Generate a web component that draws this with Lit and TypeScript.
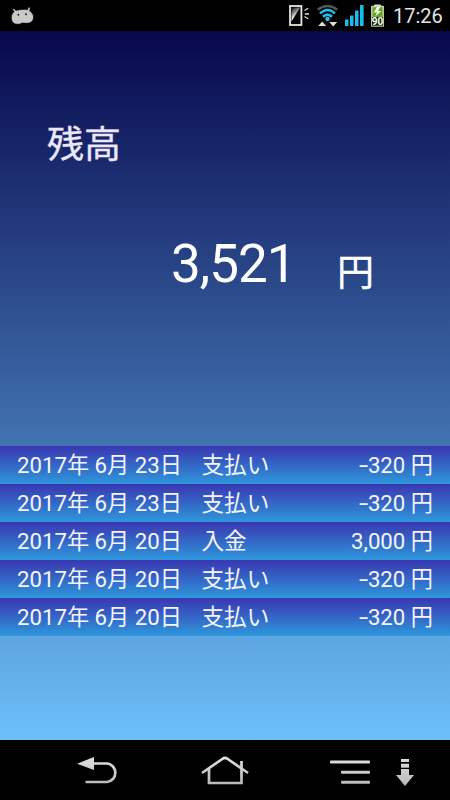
import { LitElement, html, css, svg, nothing } from "lit";
import { customElement, property } from "lit/decorators.js";

interface Entry {
  date: string;
  kind: string;
  amount: string;
}

const entries: Entry[] = [
  { date: "2017年 6月 23日", kind: "支払い", amount: "-320 円" },
  { date: "2017年 6月 23日", kind: "支払い", amount: "-320 円" },
  { date: "2017年 6月 20日", kind: "入金", amount: "3,000 円" },
  { date: "2017年 6月 20日", kind: "支払い", amount: "-320 円" },
  { date: "2017年 6月 20日", kind: "支払い", amount: "-320 円" },
];

const grey = svg`<defs><linearGradient id="g" gradientUnits="userSpaceOnUse" x1="0" y1="16" x2="0" y2="48">
  <stop offset="0" stop-color="#e2e2e2"/><stop offset="1" stop-color="#b4b4b4"/></linearGradient></defs>`;

@customElement("status-bar")
export class StatusBar extends LitElement {
  static styles = css`
    :host { display: flex; justify-content: space-between; height: 31px; background: #000; }
    svg { display: block; height: 31px; }
    .right { display: flex; }
    .clock { font-size: 20px; line-height: 32px; color: #e4e4e4; width: 57px; white-space: nowrap; }
    .level { font: bold 10px Roboto, "Liberation Sans", sans-serif; }
  `;
  render() {
    return html`
      <svg width="40" viewBox="0 0 40 31">
        <path fill="#c9c9c9" stroke="#c9c9c9" stroke-width=".4" d="M14.8 11.5L13 9.5L14 9L16 11C18 10.2 24 9.5 27.5 10.2L28.8 7.5L29.8 8L29 11C32 12.5 33.2 15 33 17.5C33 20.5 30.5 23 27 22.7C24 22.8 22 21.8 20.5 23.2C18 24.3 12.5 24 12 19.5C11.5 16.5 12 13.5 14.8 11.5Z"/>
        <circle cx="18.3" cy="14.8" r="1" fill="#222"/><circle cx="26" cy="14.2" r="1" fill="#222"/>
      </svg>
      <div class="right">
        <svg width="109" viewBox="284 0 109 31">
          <defs><linearGradient id="sheen" gradientUnits="userSpaceOnUse" x1="292" y1="8" x2="297" y2="15">
            <stop offset="0" stop-color="#111"/><stop offset="1" stop-color="#eee"/></linearGradient></defs>
          <rect x="290" y="6" width="11.4" height="19" fill="#050505" stroke="#e6e6e6" stroke-width="1.8"/>
          <path d="M291.5 7.5H300L291.5 21.5Z" fill="url(#sheen)"/>
          <path d="M304.5 10.5L308.2 8.2M304.8 14H309M304.5 16.5L308.2 18.7" stroke="#ddd" stroke-width="1.3" fill="none"/>
          <g fill="none" stroke-width="2.6">
            <path d="M317.8 9.8Q327.5 2.2 337.2 9.8" stroke="#555"/>
            <path d="M320 13.4Q327.5 6.6 335 13.4" stroke="#25bdec"/>
            <path d="M323 16.8Q327.5 12.4 332 16.8" stroke="#25bdec"/>
          </g>
          <circle cx="327.5" cy="19" r="2.2" fill="#25bdec"/>
          <path d="M318.2 26L322.2 21.5L326.2 26Z M329.2 22H337.2L333.2 26.5Z" fill="#ddd"/>
          <g fill="#18bdf0">
            <rect x="345" y="19.5" width="3.4" height="6.5" rx=".6"/><rect x="350" y="15.5" width="3.4" height="10.5" rx=".6"/>
            <rect x="355" y="10.5" width="3.5" height="15.5" rx=".6"/>
            <rect x="360" y="5" width="3.6" height="21" rx=".6"/>
          </g>
          <path d="M374.5 6.5V5H380.5V6.5" fill="#ddd" stroke="#ddd" stroke-width="1"/>
          <rect x="371.8" y="6.5" width="11.4" height="19.5" fill="#62a81e" stroke="#c8d8b0" stroke-width="1.4"/>
          <path d="M377 7L373.8 12.5H377L375.3 16.5L381.3 11H378L380 7Z" fill="#fff"/>
          <rect x="372" y="17" width="11" height="8.6" fill="#15200a"/>
          <text class="level" x="377.5" y="25" text-anchor="middle" fill="#fff">90</text>
        </svg>
        <div class="clock">17:26</div>
      </div>`;
  }
}

@customElement("balance-panel")
export class BalancePanel extends LitElement {
  static styles = css`
    :host { display: block; height: 415px; box-sizing: border-box; padding-top: 88px; color: #fff; }
    .title { margin-left: 47px; font-size: 37px; line-height: 54px; color: #ece8fa; -webkit-text-stroke: .35px currentColor; }
    .total { display: flex; align-items: baseline; margin: 56px 76px 0 171px; line-height: 70px; justify-content: space-between; }
    .sum { font-size: 53px; letter-spacing: -1px; }
    .yen { font-size: 37px; -webkit-text-stroke: .3px currentColor; position: relative; top: 4px; }
  `;
  render() {
    return html`<div class="title">残高</div>
      <div class="total"><span class="sum">3,521</span><span class="yen">円</span></div>`;
  }
}

@customElement("history-row")
export class HistoryRow extends LitElement {
  @property({ attribute: false }) entry!: Entry;
  static styles = css`
    :host { display: grid; grid-template-columns: 184.5px 1fr auto; height: 38px; box-sizing: border-box;
      padding: 0 17px; background: linear-gradient(#3a37b2, #2e97db);
      color: #f6f4ff; font-size: 22.2px; line-height: 39px; white-space: nowrap; }
    .kind { font-size: 22.6px; }
    .minus { display: inline-block; transform: scaleX(1.5); transform-origin: right; }
  `;
  render() {
    const { date, kind, amount } = this.entry;
    const negative = amount.startsWith("-");
    return html`<span>${date}</span><span class="kind">${kind}</span>
      <span>${negative ? html`<span class="minus">-</span>` : nothing}${negative ? amount.slice(1) : amount}</span>`;
  }
}

@customElement("nav-bar")
export class NavBar extends LitElement {
  static styles = css`
    :host { display: block; height: 60px; background: #000; }
    svg { display: block; }
  `;
  render() {
    return html`<svg width="450" height="60" viewBox="0 0 450 60">
      ${grey}
      <path d="M77 23.7L94 17V30Z" fill="url(#g)"/>
      <g fill="none" stroke="url(#g)" stroke-width="2.7">
        <path d="M92 23.5H107A9.3 9.3 0 0 1 107 42H85.5"/>
        <path d="M202 33L223 18.5Q225 17.2 227 18.5L248 33"/>
        <path d="M209 28V43H241.5V21"/>
      </g>
      <g fill="url(#g)">
        <rect x="330" y="20.5" width="40" height="3" rx="1"/>
        <rect x="341" y="30.7" width="29" height="3" rx="1"/>
        <rect x="341" y="40.7" width="29" height="3" rx="1"/>
        <rect x="401" y="19" width="8" height="3"/><rect x="401" y="23.7" width="8" height="4"/>
        <path d="M401 29H409V35H414L405 46L396 35H401Z"/>
      </g>
    </svg>`;
  }
}

@customElement("app-root")
export class AppRoot extends LitElement {
  static styles = css`
    :host { display: flex; flex-direction: column; height: 800px; width: 450px; overflow: hidden;
      font-family: Roboto, "Noto Sans CJK JP", sans-serif; }
    .screen { flex: 1; background: linear-gradient(#07074c, #6cc0fa); }
  `;
  render() {
    return html`<status-bar></status-bar>
      <main class="screen">
        <balance-panel></balance-panel>
        ${entries.map((e) => html`<history-row .entry=${e}></history-row>`)}
      </main>
      <nav-bar></nav-bar>`;
  }
}
